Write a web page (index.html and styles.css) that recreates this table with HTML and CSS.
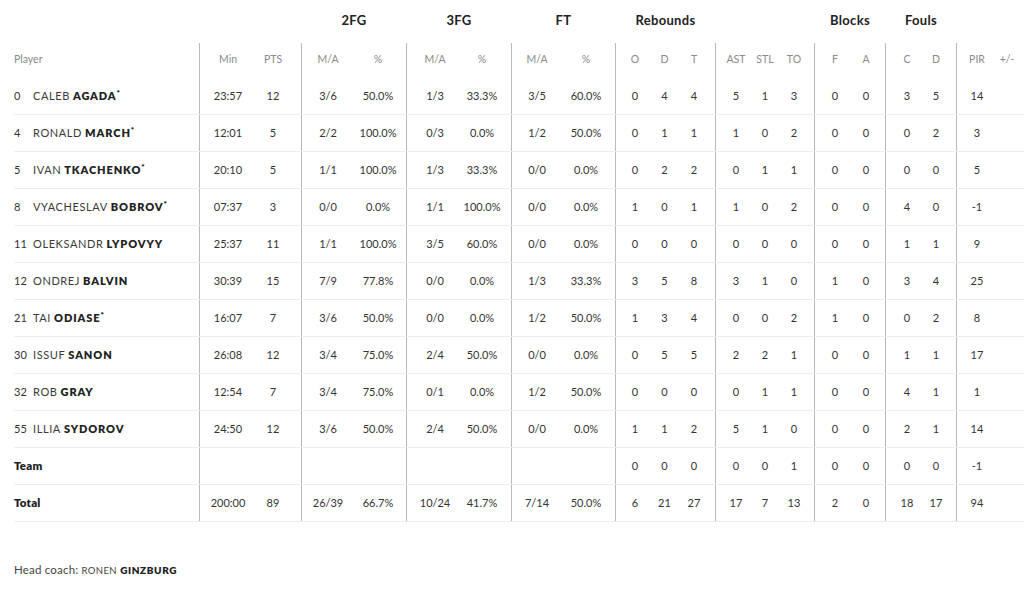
FILE: index.html
```html
<!DOCTYPE html>
<html>
<head>
<meta charset="utf-8">
<link rel="stylesheet" href="styles.css">
</head>
<body>
<div class="page">
  <div class="table">
    <div class="row titles">
      <div class="player"></div>
      <div class="grp g1"></div>
      <div class="grp g2"><span class="t">2FG</span></div>
      <div class="grp g3"><span class="t">3FG</span></div>
      <div class="grp g4"><span class="t">FT</span></div>
      <div class="grp g5"><span class="t">Rebounds</span></div>
      <div class="grp g6"></div>
      <div class="grp g7"><span class="t">Blocks</span></div>
      <div class="grp g8"><span class="t">Fouls</span></div>
      <div class="grp g9"></div>
    </div>
    <div class="row head">
      <div class="player">Player</div>
      <div class="grp g1"><span class="c">Min</span><span class="c">PTS</span></div>
      <div class="grp g2"><span class="c">M/A</span><span class="c">%</span></div>
      <div class="grp g3"><span class="c">M/A</span><span class="c">%</span></div>
      <div class="grp g4"><span class="c">M/A</span><span class="c">%</span></div>
      <div class="grp g5"><span class="c">O</span><span class="c">D</span><span class="c">T</span></div>
      <div class="grp g6"><span class="c">AST</span><span class="c">STL</span><span class="c">TO</span></div>
      <div class="grp g7"><span class="c">F</span><span class="c">A</span></div>
      <div class="grp g8"><span class="c">C</span><span class="c">D</span></div>
      <div class="grp g9"><span class="c">PIR</span><span class="c">+/-</span></div>
    </div>

    <div class="row">
      <div class="player"><span class="no">0</span><span class="fn">CALEB</span><b class="ln">AGADA</b><sup class="st">*</sup></div>
      <div class="grp g1"><span class="c">23:57</span><span class="c">12</span></div>
      <div class="grp g2"><span class="c">3/6</span><span class="c">50.0%</span></div>
      <div class="grp g3"><span class="c">1/3</span><span class="c">33.3%</span></div>
      <div class="grp g4"><span class="c">3/5</span><span class="c">60.0%</span></div>
      <div class="grp g5"><span class="c">0</span><span class="c">4</span><span class="c">4</span></div>
      <div class="grp g6"><span class="c">5</span><span class="c">1</span><span class="c">3</span></div>
      <div class="grp g7"><span class="c">0</span><span class="c">0</span></div>
      <div class="grp g8"><span class="c">3</span><span class="c">5</span></div>
      <div class="grp g9"><span class="c">14</span><span class="c"></span></div>
    </div>
    <div class="row">
      <div class="player"><span class="no">4</span><span class="fn">RONALD</span><b class="ln">MARCH</b><sup class="st">*</sup></div>
      <div class="grp g1"><span class="c">12:01</span><span class="c">5</span></div>
      <div class="grp g2"><span class="c">2/2</span><span class="c">100.0%</span></div>
      <div class="grp g3"><span class="c">0/3</span><span class="c">0.0%</span></div>
      <div class="grp g4"><span class="c">1/2</span><span class="c">50.0%</span></div>
      <div class="grp g5"><span class="c">0</span><span class="c">1</span><span class="c">1</span></div>
      <div class="grp g6"><span class="c">1</span><span class="c">0</span><span class="c">2</span></div>
      <div class="grp g7"><span class="c">0</span><span class="c">0</span></div>
      <div class="grp g8"><span class="c">0</span><span class="c">2</span></div>
      <div class="grp g9"><span class="c">3</span><span class="c"></span></div>
    </div>
    <div class="row">
      <div class="player"><span class="no">5</span><span class="fn">IVAN</span><b class="ln">TKACHENKO</b><sup class="st">*</sup></div>
      <div class="grp g1"><span class="c">20:10</span><span class="c">5</span></div>
      <div class="grp g2"><span class="c">1/1</span><span class="c">100.0%</span></div>
      <div class="grp g3"><span class="c">1/3</span><span class="c">33.3%</span></div>
      <div class="grp g4"><span class="c">0/0</span><span class="c">0.0%</span></div>
      <div class="grp g5"><span class="c">0</span><span class="c">2</span><span class="c">2</span></div>
      <div class="grp g6"><span class="c">0</span><span class="c">1</span><span class="c">1</span></div>
      <div class="grp g7"><span class="c">0</span><span class="c">0</span></div>
      <div class="grp g8"><span class="c">0</span><span class="c">0</span></div>
      <div class="grp g9"><span class="c">5</span><span class="c"></span></div>
    </div>
    <div class="row">
      <div class="player"><span class="no">8</span><span class="fn">VYACHESLAV</span><b class="ln">BOBROV</b><sup class="st">*</sup></div>
      <div class="grp g1"><span class="c">07:37</span><span class="c">3</span></div>
      <div class="grp g2"><span class="c">0/0</span><span class="c">0.0%</span></div>
      <div class="grp g3"><span class="c">1/1</span><span class="c">100.0%</span></div>
      <div class="grp g4"><span class="c">0/0</span><span class="c">0.0%</span></div>
      <div class="grp g5"><span class="c">1</span><span class="c">0</span><span class="c">1</span></div>
      <div class="grp g6"><span class="c">1</span><span class="c">0</span><span class="c">2</span></div>
      <div class="grp g7"><span class="c">0</span><span class="c">0</span></div>
      <div class="grp g8"><span class="c">4</span><span class="c">0</span></div>
      <div class="grp g9"><span class="c">-1</span><span class="c"></span></div>
    </div>
    <div class="row">
      <div class="player"><span class="no">11</span><span class="fn">OLEKSANDR</span><b class="ln">LYPOVYY</b></div>
      <div class="grp g1"><span class="c">25:37</span><span class="c">11</span></div>
      <div class="grp g2"><span class="c">1/1</span><span class="c">100.0%</span></div>
      <div class="grp g3"><span class="c">3/5</span><span class="c">60.0%</span></div>
      <div class="grp g4"><span class="c">0/0</span><span class="c">0.0%</span></div>
      <div class="grp g5"><span class="c">0</span><span class="c">0</span><span class="c">0</span></div>
      <div class="grp g6"><span class="c">0</span><span class="c">0</span><span class="c">0</span></div>
      <div class="grp g7"><span class="c">0</span><span class="c">0</span></div>
      <div class="grp g8"><span class="c">1</span><span class="c">1</span></div>
      <div class="grp g9"><span class="c">9</span><span class="c"></span></div>
    </div>
    <div class="row">
      <div class="player"><span class="no">12</span><span class="fn">ONDREJ</span><b class="ln">BALVIN</b></div>
      <div class="grp g1"><span class="c">30:39</span><span class="c">15</span></div>
      <div class="grp g2"><span class="c">7/9</span><span class="c">77.8%</span></div>
      <div class="grp g3"><span class="c">0/0</span><span class="c">0.0%</span></div>
      <div class="grp g4"><span class="c">1/3</span><span class="c">33.3%</span></div>
      <div class="grp g5"><span class="c">3</span><span class="c">5</span><span class="c">8</span></div>
      <div class="grp g6"><span class="c">3</span><span class="c">1</span><span class="c">0</span></div>
      <div class="grp g7"><span class="c">1</span><span class="c">0</span></div>
      <div class="grp g8"><span class="c">3</span><span class="c">4</span></div>
      <div class="grp g9"><span class="c">25</span><span class="c"></span></div>
    </div>
    <div class="row">
      <div class="player"><span class="no">21</span><span class="fn">TAI</span><b class="ln">ODIASE</b><sup class="st">*</sup></div>
      <div class="grp g1"><span class="c">16:07</span><span class="c">7</span></div>
      <div class="grp g2"><span class="c">3/6</span><span class="c">50.0%</span></div>
      <div class="grp g3"><span class="c">0/0</span><span class="c">0.0%</span></div>
      <div class="grp g4"><span class="c">1/2</span><span class="c">50.0%</span></div>
      <div class="grp g5"><span class="c">1</span><span class="c">3</span><span class="c">4</span></div>
      <div class="grp g6"><span class="c">0</span><span class="c">0</span><span class="c">2</span></div>
      <div class="grp g7"><span class="c">1</span><span class="c">0</span></div>
      <div class="grp g8"><span class="c">0</span><span class="c">2</span></div>
      <div class="grp g9"><span class="c">8</span><span class="c"></span></div>
    </div>
    <div class="row">
      <div class="player"><span class="no">30</span><span class="fn">ISSUF</span><b class="ln">SANON</b></div>
      <div class="grp g1"><span class="c">26:08</span><span class="c">12</span></div>
      <div class="grp g2"><span class="c">3/4</span><span class="c">75.0%</span></div>
      <div class="grp g3"><span class="c">2/4</span><span class="c">50.0%</span></div>
      <div class="grp g4"><span class="c">0/0</span><span class="c">0.0%</span></div>
      <div class="grp g5"><span class="c">0</span><span class="c">5</span><span class="c">5</span></div>
      <div class="grp g6"><span class="c">2</span><span class="c">2</span><span class="c">1</span></div>
      <div class="grp g7"><span class="c">0</span><span class="c">0</span></div>
      <div class="grp g8"><span class="c">1</span><span class="c">1</span></div>
      <div class="grp g9"><span class="c">17</span><span class="c"></span></div>
    </div>
    <div class="row">
      <div class="player"><span class="no">32</span><span class="fn">ROB</span><b class="ln">GRAY</b></div>
      <div class="grp g1"><span class="c">12:54</span><span class="c">7</span></div>
      <div class="grp g2"><span class="c">3/4</span><span class="c">75.0%</span></div>
      <div class="grp g3"><span class="c">0/1</span><span class="c">0.0%</span></div>
      <div class="grp g4"><span class="c">1/2</span><span class="c">50.0%</span></div>
      <div class="grp g5"><span class="c">0</span><span class="c">0</span><span class="c">0</span></div>
      <div class="grp g6"><span class="c">0</span><span class="c">1</span><span class="c">1</span></div>
      <div class="grp g7"><span class="c">0</span><span class="c">0</span></div>
      <div class="grp g8"><span class="c">4</span><span class="c">1</span></div>
      <div class="grp g9"><span class="c">1</span><span class="c"></span></div>
    </div>
    <div class="row">
      <div class="player"><span class="no">55</span><span class="fn">ILLIA</span><b class="ln">SYDOROV</b></div>
      <div class="grp g1"><span class="c">24:50</span><span class="c">12</span></div>
      <div class="grp g2"><span class="c">3/6</span><span class="c">50.0%</span></div>
      <div class="grp g3"><span class="c">2/4</span><span class="c">50.0%</span></div>
      <div class="grp g4"><span class="c">0/0</span><span class="c">0.0%</span></div>
      <div class="grp g5"><span class="c">1</span><span class="c">1</span><span class="c">2</span></div>
      <div class="grp g6"><span class="c">5</span><span class="c">1</span><span class="c">0</span></div>
      <div class="grp g7"><span class="c">0</span><span class="c">0</span></div>
      <div class="grp g8"><span class="c">2</span><span class="c">1</span></div>
      <div class="grp g9"><span class="c">14</span><span class="c"></span></div>
    </div>
    <div class="row">
      <div class="player strong">Team</div>
      <div class="grp g1"></div>
      <div class="grp g2"></div>
      <div class="grp g3"></div>
      <div class="grp g4"></div>
      <div class="grp g5"><span class="c">0</span><span class="c">0</span><span class="c">0</span></div>
      <div class="grp g6"><span class="c">0</span><span class="c">0</span><span class="c">1</span></div>
      <div class="grp g7"><span class="c">0</span><span class="c">0</span></div>
      <div class="grp g8"><span class="c">0</span><span class="c">0</span></div>
      <div class="grp g9"><span class="c">-1</span><span class="c"></span></div>
    </div>
    <div class="row">
      <div class="player strong">Total</div>
      <div class="grp g1"><span class="c">200:00</span><span class="c">89</span></div>
      <div class="grp g2"><span class="c">26/39</span><span class="c">66.7%</span></div>
      <div class="grp g3"><span class="c">10/24</span><span class="c">41.7%</span></div>
      <div class="grp g4"><span class="c">7/14</span><span class="c">50.0%</span></div>
      <div class="grp g5"><span class="c">6</span><span class="c">21</span><span class="c">27</span></div>
      <div class="grp g6"><span class="c">17</span><span class="c">7</span><span class="c">13</span></div>
      <div class="grp g7"><span class="c">2</span><span class="c">0</span></div>
      <div class="grp g8"><span class="c">18</span><span class="c">17</span></div>
      <div class="grp g9"><span class="c">94</span><span class="c"></span></div>
    </div>
  </div>

  <div class="coach">Head coach: <span class="cfn">RONEN</span> <b class="cln">GINZBURG</b></div>
</div>
</body>
</html>
```

FILE: styles.css
```css
* { box-sizing: border-box; }
html, body { margin: 0; padding: 0; background: #ffffff; }
body {
  font-family: Lato, "Noto Sans", sans-serif;
  font-size: 11px;
  color: #333333;
}
.page { padding-left: 14px; }
.table { width: 1010px; }
.row {
  display: flex;
  height: 37px;
  border-bottom: 1px solid #ededed;
}
.row > .player, .row > .grp { padding-bottom: 2px; }
.row.titles { height: 43px; border-bottom: none; }
.row.titles > .grp { padding-bottom: 4px; }
.row.head { height: 35px; border-bottom: none; color: #8a8a8a; font-size: 10.5px; }
.row.head > .player, .row.head > .grp { padding-bottom: 4px; }
.player {
  width: 185px;
  display: flex;
  align-items: center;
}
.head .player { color: #8a8a8a; }
.grp {
  display: flex;
  align-items: center;
  border-left: 1px solid #b8b8b8;
}
.titles .grp { border-left-color: transparent; justify-content: center; }
.t { font-weight: 700; font-size: 13px; color: #222222; letter-spacing: 0.3px; }
.c { text-align: center; white-space: nowrap; flex: none; }
.g1 { width: 102px; padding-left: 5.5px; }
.g1 .c { width: 45px; }
.g2 { width: 105px; padding-left: 1px; }
.g2 .c { width: 50px; }
.g3 { width: 105px; padding-left: 4.5px; }
.g3 .c { width: 47px; }
.g4 { width: 104px; padding-left: 0.5px; }
.g4 .c { width: 49px; }
.g5 { width: 100px; padding-left: 4.25px; }
.g5 .c { width: 29.5px; }
.g6 { width: 99px; padding-left: 5.5px; }
.g6 .c { width: 29px; }
.g7 { width: 71px; padding-left: 4.5px; }
.g7 .c { width: 31px; }
.g8 { width: 71px; padding-left: 6.5px; }
.g8 .c { width: 29px; }
.g9 { width: 68px; padding-left: 5px; }
.g9 .c { width: 30px; }
.row.titles > .grp { padding-left: 0; }

.no { width: 19px; flex: none; color: #333; }
.fn { color: #3a3a3a; letter-spacing: 0.6px; margin-right: 3px; }
.ln { font-weight: 800; color: #222; letter-spacing: 0.9px; }
.st { font-size: 8px; font-weight: 800; color: #222; align-self: flex-start; margin-top: 10px; margin-left: 0; }
.strong { font-weight: 800; color: #222; font-size: 11.5px; letter-spacing: 0.2px; }

.coach {
  margin-top: 41px;
  font-size: 11.5px;
  line-height: 14px;
  color: #444;
  letter-spacing: 0.2px;
}
.cfn { font-size: 9.5px; letter-spacing: 0.4px; }
.cln { font-size: 10px; font-weight: 800; color: #222; letter-spacing: 0.6px; }
```
